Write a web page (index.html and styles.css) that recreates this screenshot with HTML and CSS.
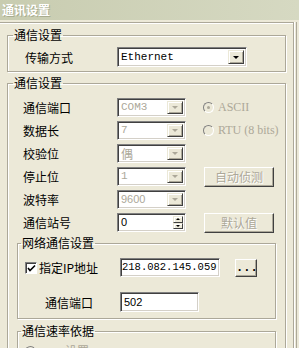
FILE: index.html
```html
<!DOCTYPE html>
<html lang="zh-CN">
<head>
    <meta charset="UTF-8">
    <meta name="viewport" content="width=device-width, initial-scale=1.0">
    <title>通讯设置</title>
    <link rel="stylesheet" href="styles.css">
</head>
<body>
    <div class="titlebar">通讯设置</div>
    <div class="frame">
        <div class="panel">
            <fieldset class="group">
                <legend>通信设置</legend>
                <div class="group-body first">
                    <div class="row">
                        <span class="label">传输方式</span>
                        <div class="combo wide">
                            <span class="value mono">Ethernet</span>
                            <span class="drop"></span>
                        </div>
                    </div>
                </div>
            </fieldset>

            <fieldset class="group">
                <legend>通信设置</legend>
                <div class="group-body">
                    <div class="settings">
                        <span class="label">通信端口</span>
                        <div class="combo disabled"><span class="value mono">COM3</span><span class="drop"></span></div>
                        <label class="radio disabled"><span class="dot checked"></span>ASCII</label>

                        <span class="label">数据长</span>
                        <div class="combo disabled"><span class="value mono">7</span><span class="drop"></span></div>
                        <label class="radio disabled"><span class="dot"></span>RTU (8 bits)</label>

                        <span class="label">校验位</span>
                        <div class="combo disabled"><span class="value">偶</span><span class="drop"></span></div>
                        <span></span>

                        <span class="label">停止位</span>
                        <div class="combo disabled"><span class="value mono">1</span><span class="drop"></span></div>
                        <button class="btn disabled" type="button">自动侦测</button>

                        <span class="label">波特率</span>
                        <div class="combo disabled"><span class="value sans">9600</span><span class="drop"></span></div>
                        <span></span>

                        <span class="label">通信站号</span>
                        <div class="spin">
                            <span class="value sans">0</span>
                            <span class="spin-btns">
                                <span class="spin-btn up"></span>
                                <span class="spin-btn down"></span>
                            </span>
                        </div>
                        <button class="btn disabled" type="button">默认值</button>
                    </div>

                    <fieldset class="group inner net">
                        <legend>网络通信设置</legend>
                        <div class="net-body">
                            <div class="net-row">
                                <label class="check-label">
                                    <span class="checkbox">
                                        <svg width="9" height="9" viewBox="0 0 9 9"><polyline points="1,4 3,6.5 8,1.5" fill="none" stroke="#000" stroke-width="1.6"/></svg>
                                    </span>
                                    指定IP地址
                                </label>
                                <div class="field ip"><span class="value mono">218.082.145.059</span></div>
                                <button class="btn dots" type="button">...</button>
                            </div>
                            <div class="net-row second">
                                <span class="net-label">通信端口</span>
                                <div class="field port"><span class="value sans">502</span></div>
                            </div>
                        </div>
                    </fieldset>

                    <fieldset class="group inner rate">
                        <legend>通信速率依据</legend>
                        <div class="rate-body">
                            <label class="radio disabled"><span class="dot"></span>PLC 设置</label>
                        </div>
                    </fieldset>
                </div>
            </fieldset>
        </div>
    </div>
</body>
</html>
```

FILE: styles.css
```css
* {
    box-sizing: border-box;
}
body {
    margin: 0;
    width: 299px;
    height: 348px;
    overflow: hidden;
    background-color: #ece9d8;
    font-family: "Noto Sans CJK SC", sans-serif;
    font-size: 12px;
    color: #000;
}
.titlebar {
    height: 20px;
    padding-left: 2px;
    line-height: 19px;
    background: linear-gradient(to right, #c8ccb0, #d6d9c2);
    color: #fff;
    font-weight: bold;
    text-shadow: 1px 1px 0 #a9ad90;
}
.frame {
    width: 297px;
    border-right: 1px solid #aca899;
}
.panel {
    width: 294px;
    margin-top: 2px;
    padding: 5px 7px 0 7px;
    border-top: 1px solid #aca899;
    border-right: 1px solid #aca899;
    box-shadow: inset 0 1px #fff, 1px 0 #fff;
    height: 330px;
}
.group {
    margin: 0 0 4px 0;
    padding: 0;
    min-width: 0;
    border: 1px solid #aca899;
    box-shadow: inset 1px 1px #fff, 1px 1px #fff;
}
.group legend {
    margin-left: 5px;
    padding: 0 1px;
    line-height: 14px;
}
.group.inner legend {
    margin-left: 3px;
}
.group-body {
    padding: 8px 9px 0 9px;
}
.group-body.first {
    padding: 5px 0 4px 17px;
}
.row {
    display: flex;
    align-items: center;
}
.label {
    width: 92px;
    white-space: nowrap;
}
.settings {
    display: grid;
    grid-template-columns: 94px 69px 1fr;
    grid-auto-rows: 19px;
    row-gap: 4px;
    align-items: center;
    margin-left: 6px;
}
.settings .label {
    width: auto;
}

/* sunken edit boxes */
.combo, .spin, .field {
    display: flex;
    align-items: center;
    background-color: #fff;
    border: 1px solid;
    border-color: #808080 #fff #fff #808080;
    box-shadow: inset 1px 1px #404040, inset -1px -1px #d4d0c8;
    padding: 2px;
    height: 19px;
}
.combo.wide {
    width: 130px;
    height: 20px;
}
.value {
    flex: 1;
    padding-left: 1px;
    line-height: 15px;
    white-space: nowrap;
    overflow: hidden;
}
.mono {
    font-family: "Liberation Mono", monospace;
    font-size: 11px;
}
.sans {
    font-family: "Liberation Sans", sans-serif;
    font-size: 11px;
}
.combo.disabled .value {
    color: #aca899;
}
.drop {
    width: 16px;
    height: 100%;
    background-color: #ece9d8;
    border: 1px solid;
    border-color: #ece9d8 #404040 #404040 #ece9d8;
    box-shadow: inset 1px 1px #fff, inset -1px -1px #aca899;
    display: flex;
    align-items: center;
    justify-content: center;
}
.drop::after {
    content: "";
    border-left: 3px solid transparent;
    border-right: 3px solid transparent;
    border-top: 3px solid #000;
}
.combo.disabled .drop::after {
    border-top-color: #aca899;
}
.spin-btns {
    display: flex;
    flex-direction: column;
    width: 10px;
    height: 100%;
}
.spin-btn {
    flex: 1;
    display: flex;
    align-items: center;
    justify-content: center;
    background-color: #ece9d8;
    border: 1px solid;
    border-color: #ece9d8 #404040 #404040 #ece9d8;
    box-shadow: inset 1px 1px #fff;
}
.spin-btn.up::after {
    content: "";
    border-left: 2px solid transparent;
    border-right: 2px solid transparent;
    border-bottom: 2px solid #000;
}
.spin-btn.down::after {
    content: "";
    border-left: 2px solid transparent;
    border-right: 2px solid transparent;
    border-top: 2px solid #000;
}

/* radios, checkbox */
.radio {
    display: flex;
    align-items: center;
    gap: 4px;
    font-family: "Liberation Serif", serif;
    font-size: 12px;
    white-space: nowrap;
}
.radio.disabled {
    color: #aca899;
}
.settings .radio {
    margin-left: 17px;
}
.dot {
    width: 11px;
    height: 11px;
    border-radius: 50%;
    border: 1px solid;
    border-color: #808080 #fff #fff #808080;
    background-color: #ece9d8;
    display: flex;
    align-items: center;
    justify-content: center;
}
.dot.checked::after {
    content: "";
    width: 3px;
    height: 3px;
    border-radius: 50%;
    background-color: #aca899;
}
.checkbox {
    width: 12px;
    height: 12px;
    background-color: #fff;
    border: 1px solid;
    border-color: #808080 #fff #fff #808080;
    box-shadow: inset 1px 1px #404040;
    display: flex;
    align-items: center;
    justify-content: center;
    padding: 1px 0 0 1px;
}

/* buttons */
.btn {
    font-family: "Noto Sans CJK SC", sans-serif;
    font-size: 12px;
    background-color: #ece9d8;
    border: 1px solid;
    border-color: #fff #404040 #404040 #fff;
    box-shadow: inset -1px -1px #aca899;
    padding: 0;
    line-height: 16px;
}
.btn.disabled {
    color: #aca899;
    text-shadow: 1px 1px 0 #fff;
}
.settings .btn {
    margin-left: 18px;
    width: 70px;
    height: 20px;
}

/* network group */
.net {
    margin: 4px 0 0 0;
}
.net-body {
    padding: 8px 0 6px 7px;
}
.net-row {
    display: flex;
    align-items: center;
}
.net-row.second {
    margin-top: 15px;
}
.check-label {
    width: 95px;
    display: flex;
    align-items: center;
    gap: 2px;
    white-space: nowrap;
}
.net-label {
    width: 95px;
    padding-left: 20px;
}
.field.ip {
    width: 100px;
    padding: 2px 1px;
}
.field.ip .value {
    font-size: 10.5px;
    padding-left: 0;
}
.field.port {
    width: 79px;
    height: 20px;
}
.btn.dots {
    margin-left: 15px;
    width: 22px;
    height: 18px;
    font-family: "Liberation Mono", monospace;
    font-weight: bold;
    line-height: 12px;
}
.rate {
    margin-top: 5px;
}
.rate-body {
    padding: 4px 0 6px 7px;
}
```
